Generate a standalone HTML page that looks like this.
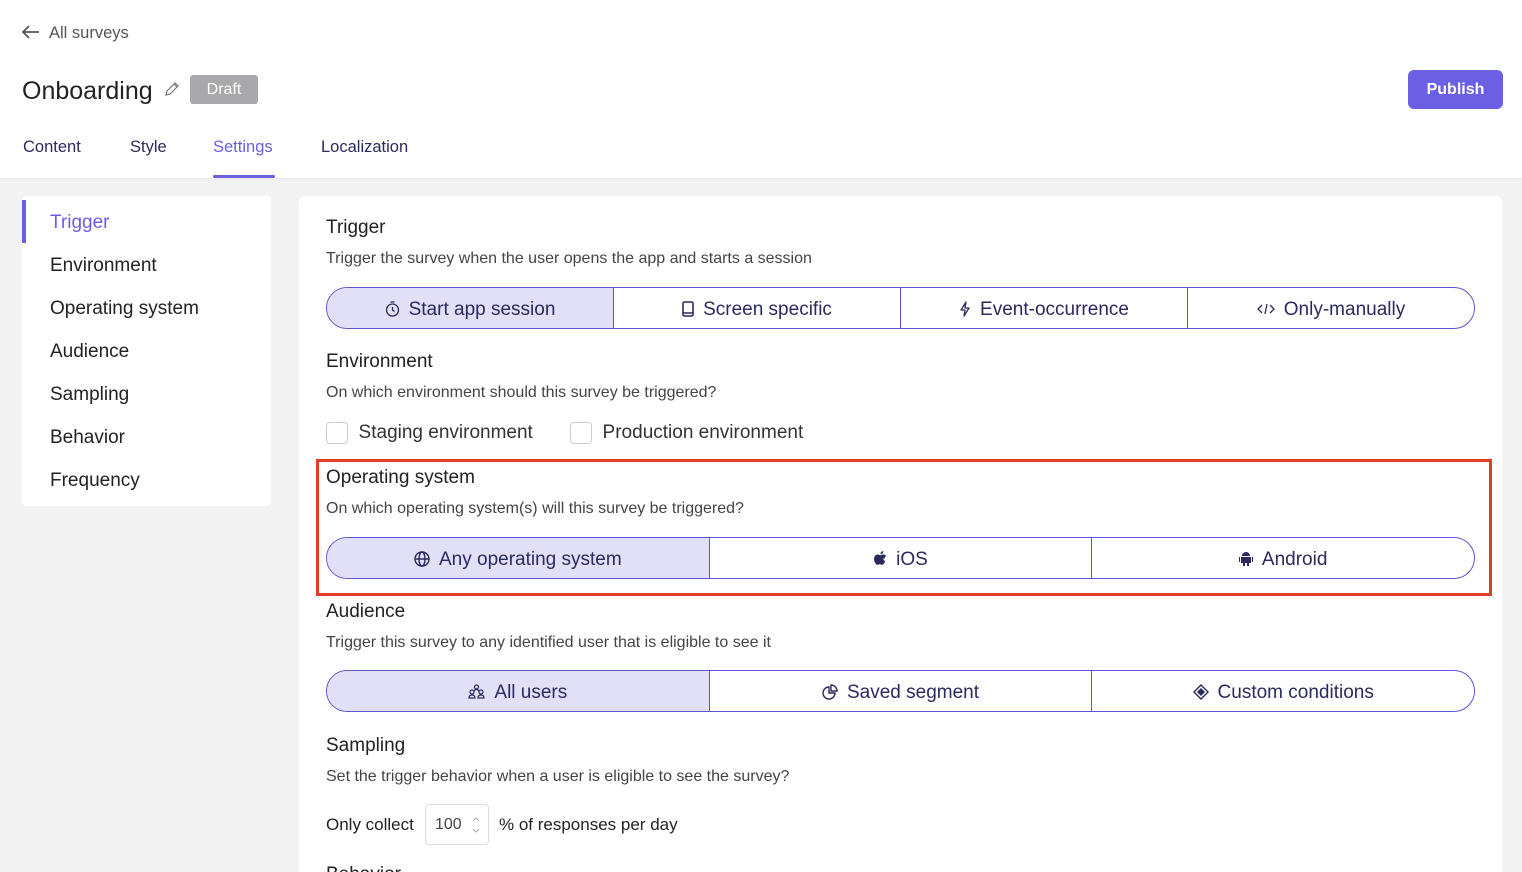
<!DOCTYPE html>
<html><head><meta charset="utf-8"><style>
*{box-sizing:border-box;margin:0;padding:0}
html,body{width:1522px;height:872px;overflow:hidden}
body{background:#f3f3f3;font-family:"Liberation Sans",sans-serif;color:#222;position:relative}
.hdr{position:absolute;left:0;top:0;width:1522px;height:178px;background:#fff;box-shadow:0 1px 3px rgba(0,0,0,.06)}
.abs{position:absolute;white-space:nowrap}
.tab{position:absolute;top:138px;font-size:16.5px;color:#2b2a5e}
.side{position:absolute;left:22px;top:196px;width:249px;height:310px;background:#fff;border-radius:4px}
.side div{position:absolute;left:28px;font-size:19px;color:#222}
.main{position:absolute;left:299px;top:196px;width:1203px;height:700px;background:#fff;border-radius:6px}
.h{position:absolute;left:27px;font-size:19px;color:#222}
.d{position:absolute;left:27px;font-size:16px;color:#444}
.seg{position:absolute;left:27px;width:1149px;height:42px;border:1px solid #5b57d1;border-radius:21px;display:flex;overflow:hidden}
.seg div{flex:1;display:flex;align-items:center;justify-content:center;font-size:19px;color:#2b2a5e;border-left:1px solid #5b57d1;gap:9px;padding-top:3px}
.seg div:first-child{border-left:none;background:#e2e0f7}
.seg svg{margin-top:-2px}
.cb{display:inline-block;width:22px;height:22px;border:1px solid #ccc;border-radius:4px;vertical-align:middle}
</style></head><body>
<div class="hdr">
 <div class="abs" style="left:22px;top:24px;font-size:16.5px;color:#555"><svg width="18" height="14" viewBox="0 0 18 14" style="vertical-align:-1px;margin-right:9px"><path d="M17 7H2M7 1L1 7l6 6" fill="none" stroke="#555" stroke-width="1.8"/></svg>All surveys</div>
 <div class="abs" style="left:22px;top:77px;font-size:25px;color:#222">Onboarding</div>
 <svg class="abs" style="left:164px;top:81px" width="16" height="16" viewBox="0 0 16 16"><path d="M2 14l1-4 8-8 3 3-8 8z M10 3l3 3" fill="none" stroke="#777" stroke-width="1.2"/></svg>
 <div class="abs" style="left:190px;top:75px;width:68px;height:29px;background:#a9a9ad;border-radius:3px;color:#fff;font-size:16px;text-align:center;line-height:29px">Draft</div>
 <div class="abs" style="left:1408px;top:70px;width:95px;height:39px;background:#6b5fe3;border-radius:6px;color:#fff;font-size:16px;font-weight:bold;text-align:center;line-height:39px">Publish</div>
 <div class="tab" style="left:23px">Content</div>
 <div class="tab" style="left:130px">Style</div>
 <div class="tab" style="left:213px;color:#6b5fe3">Settings</div>
 <div class="abs" style="left:213px;top:175px;width:62px;height:3px;background:#6b5fe3;border-radius:2px"></div>
 <div class="tab" style="left:321px">Localization</div>
</div>
<div class="side">
 <div style="left:0;top:4px;width:4px;height:43px;background:#6b5fe3"></div>
 <div style="top:16px;color:#6b5fe3">Trigger</div>
 <div style="top:59px">Environment</div>
 <div style="top:102px">Operating system</div>
 <div style="top:145px">Audience</div>
 <div style="top:188px">Sampling</div>
 <div style="top:231px">Behavior</div>
 <div style="top:274px">Frequency</div>
</div>
<div class="main">
 <div class="h" style="top:21px">Trigger</div>
 <div class="d" style="top:54px">Trigger the survey when the user opens the app and starts a session</div>
 <div class="seg" style="top:91px">
  <div><svg width="15" height="16" viewBox="0 0 15 16" fill="none" stroke="#2b2a5e" stroke-width="1.3"><circle cx="7.5" cy="9" r="6"/><path d="M7.5 6v3l2 1.5M5.5 1h4"/></svg>Start app session</div>
  <div><svg width="12" height="16" viewBox="0 0 12 16"><rect x="1" y="1" width="10" height="14" rx="1.5" fill="none" stroke="#2b2a5e" stroke-width="1.6"/><path d="M1 12h10" stroke="#2b2a5e" stroke-width="1.6"/></svg>Screen specific</div>
  <div><svg width="12" height="16" viewBox="0 0 12 16"><path d="M7 1L2 9h4l-1 6 5-8H6z" fill="none" stroke="#2b2a5e" stroke-width="1.3" stroke-linejoin="round"/></svg>Event-occurrence</div>
  <div><svg width="18" height="14" viewBox="0 0 18 14" fill="none" stroke="#2b2a5e" stroke-width="1.3"><path d="M5 3L1 7l4 4M13 3l4 4-4 4M10 2L8 12"/></svg>Only-manually</div>
 </div>
 <div class="h" style="top:155px">Environment</div>
 <div class="d" style="top:188px">On which environment should this survey be triggered?</div>
 <div class="abs" style="left:27px;top:226px;font-size:19px;color:#333"><span class="cb"></span>&nbsp;&nbsp;Staging environment</div>
 <div class="abs" style="left:271px;top:226px;font-size:19px;color:#333"><span class="cb"></span>&nbsp;&nbsp;Production environment</div>
 <div class="h" style="top:271px">Operating system</div>
 <div class="d" style="top:304px">On which operating system(s) will this survey be triggered?</div>
 <div class="seg" style="top:341px">
  <div><svg width="16" height="16" viewBox="0 0 16 16" fill="none" stroke="#2b2a5e" stroke-width="1.4"><circle cx="8" cy="8" r="7"/><ellipse cx="8" cy="8" rx="3" ry="7"/><path d="M1 8h14"/></svg>Any operating system</div>
  <div><svg width="14" height="17" viewBox="0 0 14 17"><path d="M11.5 9c0-2 1.6-2.9 1.7-3-1-1.4-2.4-1.5-2.9-1.5-1.2-.1-2.4.7-3 .7-.6 0-1.6-.7-2.6-.7C3.300 4.500 1 5.800 1 9.100c0 1.400.5 2.900 1.200 3.900.6.900 1.300 1.900 2.200 1.900.9 0 1.200-.6 2.300-.6 1.100 0 1.400.6 2.300.6 1 0 1.600-.9 2.200-1.800.7-1 .9-1.900.9-2-.1 0-1.800-.7-1.800-2.900zM9.600 3.300c.5-.6.800-1.400.7-2.300-.7 0-1.600.5-2.100 1.100-.5.500-.9 1.400-.8 2.200.8.100 1.600-.4 2.200-1z" fill="#2b2a5e"/></svg>iOS</div>
  <div><svg width="14" height="16" viewBox="0 0 14 16"><path d="M2 6h10v6H2zM3 5a4 4 0 0 1 8 0zM0 6h1v5H0zM13 6h1v5h-1zM4 12h2v3H4zM8 12h2v3H8z" fill="#2b2a5e"/></svg>Android</div>
 </div>
 <div class="abs" style="left:17px;top:263px;width:1176px;height:137px;border:3px solid #e23b26"></div>
 <div class="h" style="top:405px">Audience</div>
 <div class="d" style="top:438px">Trigger this survey to any identified user that is eligible to see it</div>
 <div class="seg" style="top:474px">
  <div><svg width="17" height="15" viewBox="0 0 17 15" fill="none" stroke="#2b2a5e" stroke-width="1.2"><circle cx="8.5" cy="3" r="2"/><circle cx="4" cy="8" r="2"/><circle cx="13" cy="8" r="2"/><path d="M1 14c0-2 1.3-3 3-3s3 1 3 3zM10 14c0-2 1.3-3 3-3s3 1 3 3zM6 8c0-1.5 1-2.500 2.500-2.500S11 6.500 11 8"/></svg>All users</div>
  <div><svg width="16" height="16" viewBox="0 0 16 16" fill="none" stroke="#2b2a5e" stroke-width="1.4"><path d="M7 3a6 6 0 1 0 6 6H7z M9 1v6h6a6 6 0 0 0-6-6z"/></svg>Saved segment</div>
  <div><svg width="16" height="16" viewBox="0 0 16 16"><path d="M8 1l7 7-7 7-7-7z" fill="none" stroke="#2b2a5e" stroke-width="1.4"/><path d="M8 4l4 4-4 4-4-4z" fill="#2b2a5e"/></svg>Custom conditions</div>
 </div>
 <div class="h" style="top:539px">Sampling</div>
 <div class="d" style="top:572px">Set the trigger behavior when a user is eligible to see the survey?</div>
 <div class="abs" style="left:27px;top:619px;font-size:17px">Only collect</div>
 <div class="abs" style="left:126px;top:608px;width:64px;height:41px;border:1px solid #ddd;border-radius:4px;font-size:16px;color:#444;padding:11px 0 0 9px">100<svg style="position:absolute;right:8px;top:10px" width="8" height="20" viewBox="0 0 8 20" fill="none" stroke="#aaa" stroke-width="1"><path d="M1 6l3-3 3 3M1 14l3 3 3-3"/></svg></div>
 <div class="abs" style="left:200px;top:619px;font-size:17px">% of responses per day</div>
 <div class="h" style="top:668px">Behavior</div>
</div>
</body></html>
